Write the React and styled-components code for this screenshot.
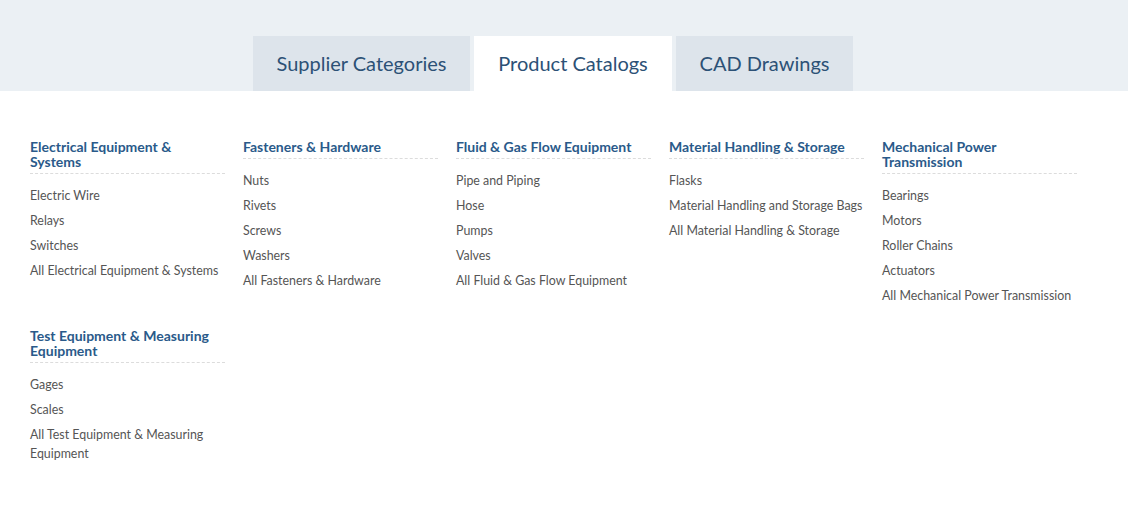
import React, {useState} from 'react';
import styled, {createGlobalStyle} from 'styled-components';

const GlobalStyle = createGlobalStyle`
  body {
    margin: 0;
    background: #fff;
    font-family: Lato, "Open Sans", sans-serif;
  }
`;

const StyledHeaderBand = styled.section`
  background: #ebf0f4;
  height: 91px;
  display: flex;
  align-items: flex-end;
  padding-left: 253px;
  box-sizing: border-box;
`;

const StyledTabs = styled.nav`
  display: flex;
  gap: 4px;
`;

const StyledTab = styled.button`
  border: none;
  height: 55px;
  padding: 0 0 2px;
  white-space: nowrap;
  font-family: Lato, sans-serif;
  font-size: 20px;
  color: #2c5176;
  cursor: pointer;
  background: ${(props) => (props.$active ? '#fff' : '#dde4eb')};
  width: ${(props) => props.$w}px;
`;

const StyledGrid = styled.section`
  display: grid;
  grid-template-columns: repeat(5, 195px);
  column-gap: 18px;
  row-gap: 17px;
  padding: 48px 0 0 30px;
`;

const StyledHeading = styled.h3`
  margin: 0;
  font-size: 14px;
  font-weight: 700;
  line-height: 15px;
  color: #2a5a8a;
  padding-bottom: 4px;
  border-bottom: 1px dashed #dcdcdc;
`;

const StyledList = styled.ul`
  list-style: none;
  margin: 12px 0 0;
  padding: 0;
`;

const StyledItem = styled.li`
  font-size: 12.4px;
  line-height: 19px;
  color: #555;
  margin-bottom: 6px;
`;

const categories = [
  {title: 'Electrical Equipment & Systems', items: ['Electric Wire', 'Relays', 'Switches', 'All Electrical Equipment & Systems']},
  {title: 'Fasteners & Hardware', items: ['Nuts', 'Rivets', 'Screws', 'Washers', 'All Fasteners & Hardware']},
  {title: 'Fluid & Gas Flow Equipment', items: ['Pipe and Piping', 'Hose', 'Pumps', 'Valves', 'All Fluid & Gas Flow Equipment']},
  {title: 'Material Handling & Storage', items: ['Flasks', 'Material Handling and Storage Bags', 'All Material Handling & Storage']},
  {title: 'Mechanical Power Transmission', items: ['Bearings', 'Motors', 'Roller Chains', 'Actuators', 'All Mechanical Power Transmission']},
  {title: 'Test Equipment & Measuring Equipment', items: ['Gages', 'Scales', 'All Test Equipment & Measuring Equipment']},
];

const tabs = [
  {label: 'Supplier Categories', w: 217},
  {label: 'Product Catalogs', w: 198},
  {label: 'CAD Drawings', w: 177},
];

const App = () => {
  const [activeTab, setActiveTab] = useState(1);

  return (
    <div>
      <GlobalStyle />
      <StyledHeaderBand>
        <StyledTabs>
          {tabs.map((tab, index) => (
            <StyledTab
              key={tab.label}
              $w={tab.w}
              $active={activeTab === index}
              onClick={() => setActiveTab(index)}
            >
              {tab.label}
            </StyledTab>
          ))}
        </StyledTabs>
      </StyledHeaderBand>
      <StyledGrid>
        {categories.map((cat) => (
          <div key={cat.title}>
            <StyledHeading>{cat.title}</StyledHeading>
            <StyledList>
              {cat.items.map((item) => (
                <StyledItem key={item}>{item}</StyledItem>
              ))}
            </StyledList>
          </div>
        ))}
      </StyledGrid>
    </div>
  );
};

export default App;
